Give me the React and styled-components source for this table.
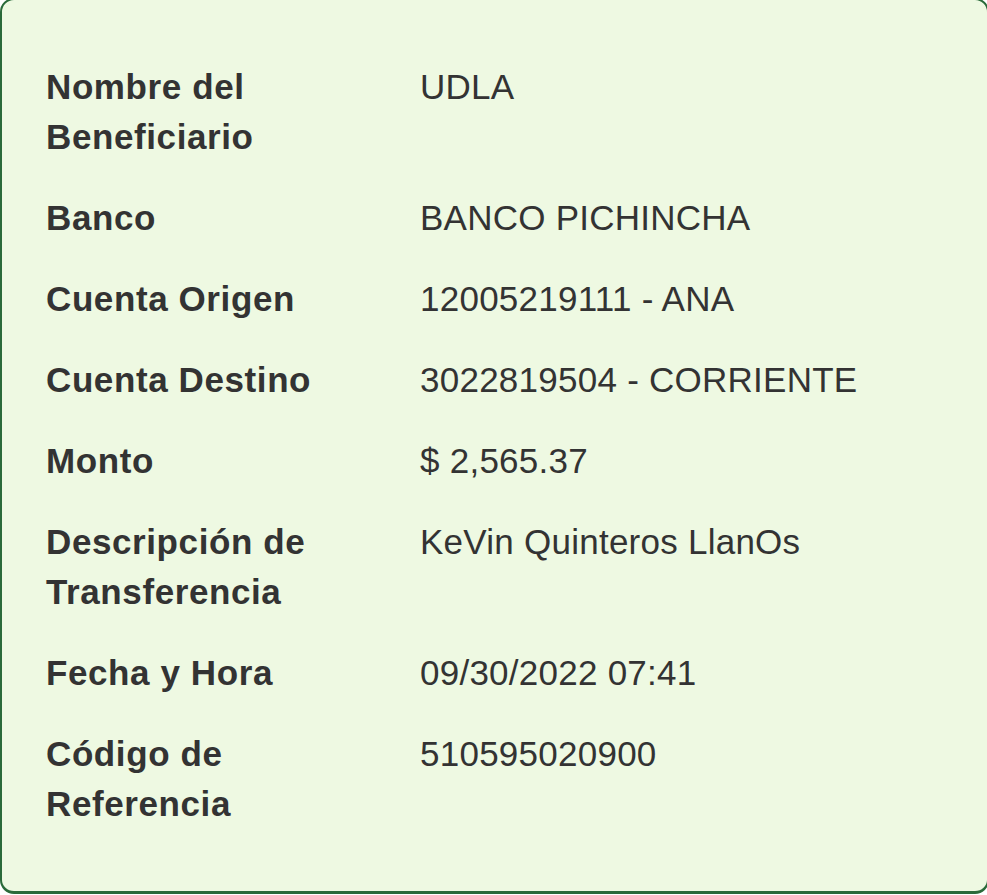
import React from "react";
import styled, { createGlobalStyle } from "styled-components";

const Global = createGlobalStyle`
  html, body { margin: 0; padding: 0; background: #ffffff; overflow: hidden; }
  body { font-family: "Liberation Sans", Arial, Helvetica, sans-serif; }
`;

const Card = styled.section`
  box-sizing: border-box;
  width: calc(100% + 2px);
  margin-top: -2px;
  background: #eef9e2;
  border: 2px solid #2a6a3a;
  border-bottom-width: 3px;
  border-radius: 14px;
  padding: 62px 40px 62px 44px;
`;

const List = styled.dl`
  margin: 0;
  display: grid;
  grid-template-columns: 340px 1fr;
  column-gap: 34px;
  row-gap: 31px;
  color: #333333;
  font-size: 35px;
  line-height: 50px;
`;

const Label = styled.dt`
  margin: 0;
  font-weight: 700;
  letter-spacing: 0.6px;
`;

const Value = styled.dd`
  margin: 0;
  font-weight: 400;
  letter-spacing: 0.25px;
`;

const rows = [
  ["Nombre del Beneficiario", "UDLA"],
  ["Banco", "BANCO PICHINCHA"],
  ["Cuenta Origen", "12005219111 - ANA"],
  ["Cuenta Destino", "3022819504 - CORRIENTE"],
  ["Monto", "$ 2,565.37"],
  ["Descripción de Transferencia", "KeVin Quinteros LlanOs"],
  ["Fecha y Hora", "09/30/2022 07:41"],
  ["Código de Referencia", "510595020900"],
];

export default function App() {
  return (
    <>
      <Global />
      <Card>
        <List>
          {rows.map(([label, value]) => (
            <React.Fragment key={label}>
              <Label>{label}</Label>
              <Value>{value}</Value>
            </React.Fragment>
          ))}
        </List>
      </Card>
    </>
  );
}
